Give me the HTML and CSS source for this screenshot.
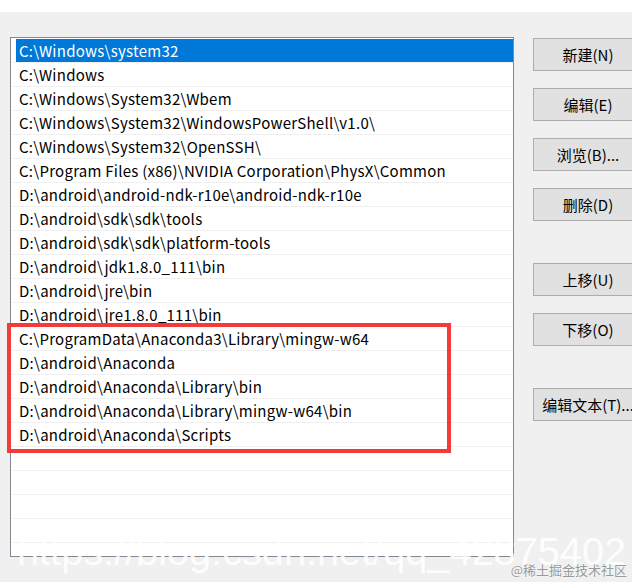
FILE: index.html
```html
<!DOCTYPE html>
<html lang="zh-CN">
<head>
    <meta charset="UTF-8">
    <meta name="viewport" content="width=device-width, initial-scale=1.0">
    <title>编辑环境变量</title>
    <link rel="stylesheet" href="styles.css">
</head>
<body>
    <div class="topbar"></div>

    <div class="dialog">
        <div class="pathlist">
            <div class="row"><div class="item selected">C:\Windows\system32</div></div>
            <div class="row"><div class="item">C:\Windows</div></div>
            <div class="row"><div class="item">C:\Windows\System32\Wbem</div></div>
            <div class="row"><div class="item">C:\Windows\System32\WindowsPowerShell\v1.0\</div></div>
            <div class="row"><div class="item">C:\Windows\System32\OpenSSH\</div></div>
            <div class="row"><div class="item">C:\Program Files (x86)\NVIDIA Corporation\PhysX\Common</div></div>
            <div class="row"><div class="item">D:\android\android-ndk-r10e\android-ndk-r10e</div></div>
            <div class="row"><div class="item">D:\android\sdk\sdk\tools</div></div>
            <div class="row"><div class="item">D:\android\sdk\sdk\platform-tools</div></div>
            <div class="row"><div class="item">D:\android\jdk1.8.0_111\bin</div></div>
            <div class="row"><div class="item">D:\android\jre\bin</div></div>
            <div class="row"><div class="item">D:\android\jre1.8.0_111\bin</div></div>
            <div class="row"><div class="item">C:\ProgramData\Anaconda3\Library\mingw-w64</div></div>
            <div class="row"><div class="item">D:\android\Anaconda</div></div>
            <div class="row"><div class="item">D:\android\Anaconda\Library\bin</div></div>
            <div class="row"><div class="item">D:\android\Anaconda\Library\mingw-w64\bin</div></div>
            <div class="row"><div class="item">D:\android\Anaconda\Scripts</div></div>
            <div class="row"><div class="item"></div></div>
            <div class="row"><div class="item"></div></div>
            <div class="row"><div class="item"></div></div>
            <div class="row"><div class="item"></div></div>
            <div class="row"><div class="item"></div></div>
        </div>

        <div class="buttons">
            <button>新建(N)</button>
            <button>编辑(E)</button>
            <button>浏览(B)...</button>
            <button>删除(D)</button>
            <button class="group">上移(U)</button>
            <button>下移(O)</button>
            <button class="group">编辑文本(T)...</button>
        </div>
    </div>

    <!-- 标注框 -->
    <div class="highlight"></div>

    <div class="watermark">https://blog.csdn.net/qq_42875402</div>
    <div class="credit">@稀土掘金技术社区</div>
</body>
</html>
```

FILE: styles.css
```css
* {
    margin: 0;
    padding: 0;
    box-sizing: border-box;
}

body {
    width: 632px;
    height: 582px;
    overflow: hidden;
    position: relative;
    background: #f0f0f0;
    font-family: "Noto Sans CJK SC", "Noto Sans", sans-serif;
    font-size: 15px;
    color: #000;
}

.topbar {
    height: 12px;
    background: #fff;
}

.dialog {
    display: flex;
    align-items: flex-start;
    gap: 19px;
    padding: 25px 0 0 10px;
}

.pathlist {
    width: 504px;
    height: 520px;
    flex-shrink: 0;
    background: #fff;
    border: 1px solid #828790;
    padding-top: 1px;
    overflow: hidden;
}

.row {
    height: 24px;
    margin-left: 1px;
    border-bottom: 1px solid #f0f0f0;
}

.item {
    height: 23px;
    margin-left: 4px;
    padding-left: 3px;
    line-height: 23px;
    letter-spacing: 0.26px;
    white-space: nowrap;
}

.item.selected {
    background: #0078d7;
    color: #fff;
}

.buttons {
    display: flex;
    flex-direction: column;
    gap: 17px;
    width: 110px;
    flex-shrink: 0;
    padding-top: 1px;
}

button {
    height: 33px;
    background: #e1e1e1;
    border: 1px solid #adadad;
    font-family: inherit;
    font-size: 15px;
    color: #000;
    white-space: nowrap;
}

button.group {
    margin-top: 25px;
}

.highlight {
    position: absolute;
    left: 7px;
    top: 323px;
    width: 444px;
    height: 130px;
    border: 4px solid #f43b3b;
}

.watermark {
    position: absolute;
    left: 17px;
    top: 532px;
    font-family: "Liberation Sans", Arial, sans-serif;
    font-size: 39.7px;
    line-height: 39.7px;
    color: rgba(255, 255, 255, 0.9);
    white-space: nowrap;
}

.credit {
    position: absolute;
    right: 5px;
    top: 562px;
    font-family: "Noto Sans CJK SC", sans-serif;
    font-size: 13px;
    line-height: 16px;
    color: #9a9a9a;
    text-shadow: 0 0 2px #fff;
    white-space: nowrap;
}
```
